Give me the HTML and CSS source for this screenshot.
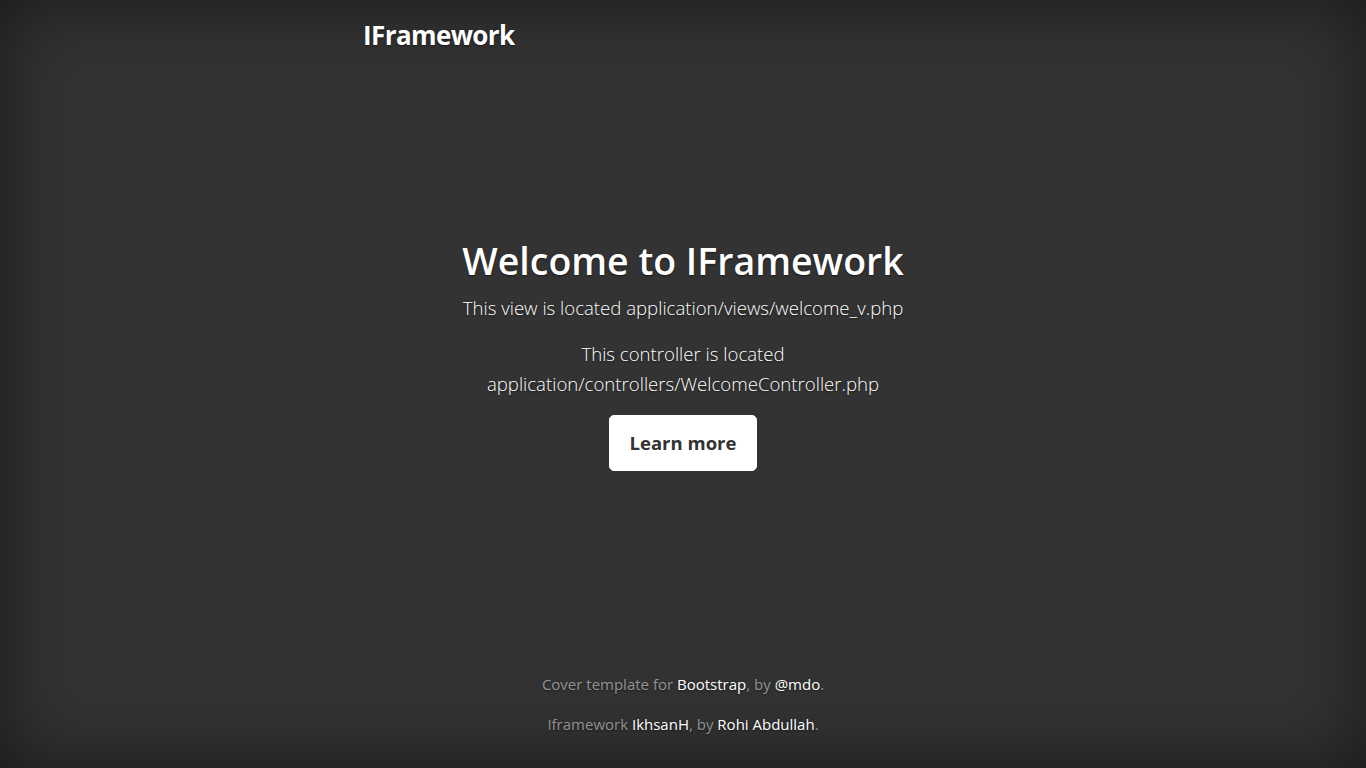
FILE: index.html
```html
<!DOCTYPE html>
<html lang="en">
<head>
<meta charset="utf-8">
<title>IFramework</title>
<link rel="stylesheet" href="styles.css">
</head>
<body>
<div class="cover-container">
  <header class="masthead">
    <h3 class="masthead-brand">IFramework</h3>
  </header>
  <main class="cover">
    <h1 class="cover-heading">Welcome to IFramework</h1>
    <p class="lead">This view is located application/views/welcome_v.php</p>
    <p class="lead">This controller is located application/controllers/WelcomeController.php</p>
    <p class="lead"><a href="#" class="btn">Learn more</a></p>
  </main>
  <footer class="mastfoot">
    <p>Cover template for <a href="#">Bootstrap</a>, by <a href="#">@mdo</a>.</p>
    <p>Iframework <a href="#">IkhsanH</a>, by <a href="#">Rohi Abdullah</a>.</p>
  </footer>
</div>
</body>
</html>
```
FILE: styles.css
```css
html, body {
  height: 100%;
}
body {
  margin: 0;
  display: flex;
  background-color: #333;
  color: #fff;
  text-align: center;
  font-family: "Open Sans", "Noto Sans", sans-serif;
  font-size: 16px;
  line-height: 1.5;
  text-shadow: 0 1px 2px rgba(0,0,0,.5);
  box-shadow: inset 0 0 80px rgba(0,0,0,.5);
}
.cover-container {
  display: flex;
  flex-direction: column;
  width: 100%;
  max-width: 672px;
  height: 100%;
  padding: 16px;
  margin: 0 auto;
  box-sizing: border-box;
}
.masthead {
  margin-bottom: auto;
  padding-top: 2px;
}
.masthead-brand {
  margin: 0;
  text-align: left;
  font-size: 26px;
  font-weight: 700;
  line-height: 34px;
  letter-spacing: -0.6px;
}
.cover {
  padding: 0 24px;
}
.cover-heading {
  margin: 0 0 8px;
  font-size: 37.5px;
  font-weight: 600;
  line-height: 48px;
}
.lead {
  margin: 0 0 16px;
  font-size: 18.6px;
  font-weight: 300;
  line-height: 30px;
}
.btn {
  display: inline-block;
  padding: 12px 20px;
  font-size: 18.5px;
  font-weight: 700;
  line-height: 30px;
  color: #333;
  background: #fff;
  border: 1px solid #fff;
  border-radius: 5px;
  text-decoration: none;
  text-shadow: none;
}
.mastfoot {
  margin-top: auto;
  color: rgba(255,255,255,.5);
  font-size: 15px;
}
.mastfoot p {
  margin: 0 0 16px;
  line-height: 24px;
}
.mastfoot a {
  color: #fff;
  text-decoration: none;
}
```
